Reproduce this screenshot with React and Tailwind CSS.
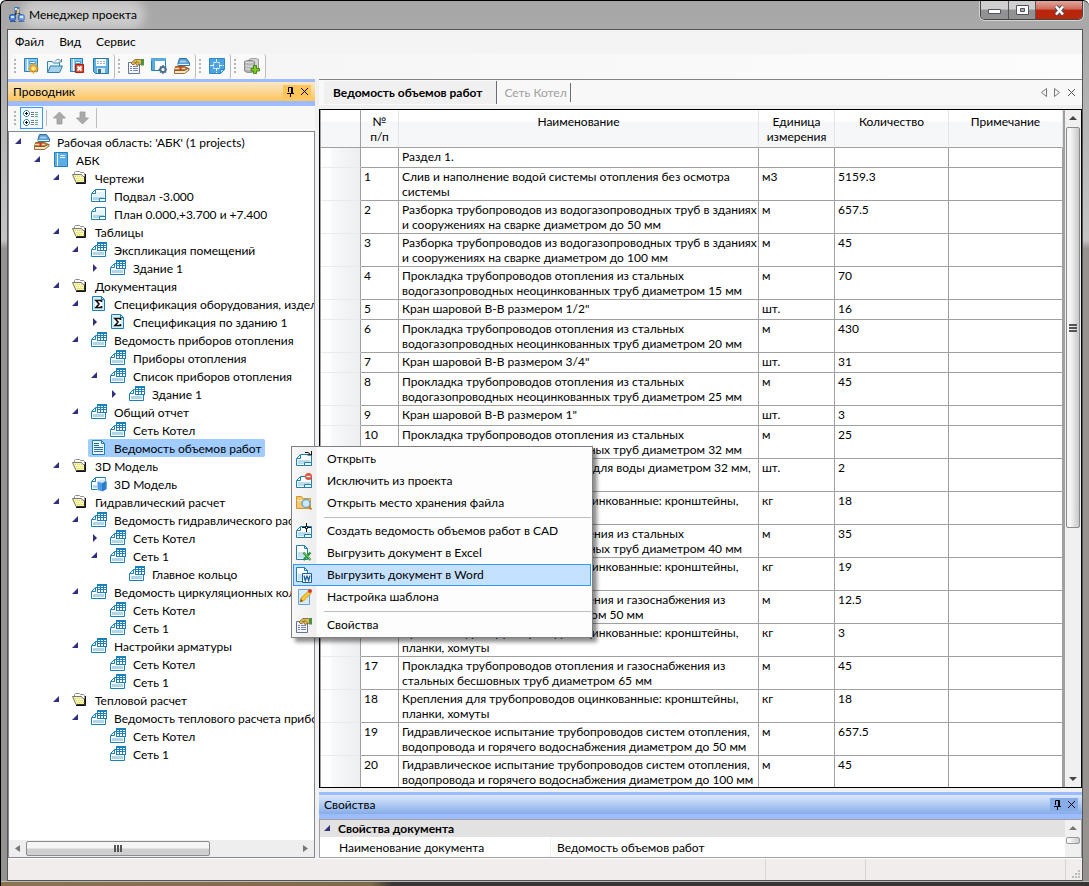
/**
 * App.jsx
 *
 * Project manager window: explorer tree on the left, bill of quantities
 * on the right, properties panel below and the document context menu.
 */

import { useState } from "react";
import clsx from "clsx";

/* ── Icons ───────────────────────────────────────────────────── */
const Icon = ({ children, size = 16 }) => (
  <svg
    width={size}
    height={size}
    viewBox="0 0 16 16"
    className="shrink-0"
    fill="none"
    aria-hidden="true"
  >
    {children}
  </svg>
);

const SheetIcon = () => (
  <Icon>
    <path d="M4.500 1.500h10v12H.5v-8z" fill="#fff" stroke="#1c7fb5" />
    <path d="M5 4h8v5H2V6.500h3z" fill="#e6f3f9" />
    <path d="M2 9h11v3H2z" fill="#b0d6e8" />
    <path d="M1 5.500h3.500V2" stroke="#1c7fb5" />
    <path d="M8.500 13.500v-3h6v3z" fill="#fff" stroke="#1c7fb5" />
  </Icon>
);

const TableDocIcon = () => (
  <Icon>
    <path d="M4.500 3.500h10v11H.5v-7z" fill="#fff" stroke="#1c7fb5" />
    <path d="M1 7.500h3.500V4" stroke="#1c7fb5" />
    <path d="M2 10h11v3H2z" fill="#b0d6e8" />
    <path d="M6 0h10v9H6z" fill="#1c7fb5" />
    <path d="M7 2h2v1H7zM10 2h2v1h-2zM13 2h2v1h-2zM7 4h2v1H7zM10 4h2v1h-2zM13 4h2v1h-2zM7 6h2v2H7zM10 6h2v2h-2zM13 6h2v2h-2z" fill="#fff" />
  </Icon>
);

const FolderIcon = () => (
  <Icon>
    <path d="M2.500 4.500V2.500l1-1h4l1 1h3l1 1v2" fill="#fff" stroke="#8a8a8a" />
    <path d="M.5 4.500h9l1.500 2h2v6H4z" fill="#f4f2b8" stroke="#77776a" />
    <path d="M13.500 4v9.500H4" stroke="#111" />
    <path d="M12.500 7v5.500H5" stroke="#333" />
    <path d="M3 6.500h7M4 8.500h8M5 10.500h7" stroke="#e8e22c" strokeDasharray="1 1" />
    <path d="M4 7.500h8M5 9.500h7" stroke="#fff" strokeDasharray="1 1" />
  </Icon>
);

const BookIcon = () => (
  <Icon>
    <path d="M1.500.500h13v14h-13z" fill="#5bade4" stroke="#2280bd" />
    <path d="M4 1h1v13H4z" fill="#fff" />
    <path d="M7 3.500h5M7 5.500h5" stroke="#e7f5fd" />
  </Icon>
);

const BooksIcon = () => (
  <Icon>
    <path d="M4 5l1.500-4.500h7L15.500 5v2.500H4z" fill="#5a9fd0" stroke="#23699e" strokeWidth=".9" />
    <path d="M6.500 2.500h5l1.500 2H5.500z" fill="#a5d0ec" />
    <path d="M4 6.500h11" stroke="#e8f3fa" />
    <path d="M1.500 8.500h9l4 2v2H.5z" fill="#c9842f" stroke="#7a4a1a" strokeWidth=".8" />
    <path d="M1 10.500h10" stroke="#f7dcae" />
    <path d="M.5 12.500h10L15 10v2l-4.500 3.500H.500z" fill="#f9e3c5" stroke="#7a4a1a" strokeWidth=".8" />
    <path d="M6.500 8.500v3.500" stroke="#e02a1e" strokeWidth="2" />
  </Icon>
);

const SigmaIcon = () => (
  <Icon>
    <path d="M1.500.5h9l3 3v11h-12z" fill="#d3ecf7" stroke="#1c7fb5" />
    <path d="M10.500.5v3h3" stroke="#1c7fb5" />
    <path d="M4 4h7v8H4z" fill="#fff" />
    <path d="M10.500 6V4.500H5L8 8l-3 3.500h5.500V10" stroke="#111" strokeWidth="1.600" />
  </Icon>
);

const TextDocIcon = () => (
  <Icon>
    <path d="M1.500.5h9l3 3v11h-12z" fill="#eaf7fd" stroke="#1c7fb5" />
    <path d="M10.500.5v3h3" stroke="#1c7fb5" />
    <path d="M3 3.500h5M3 5.500h5M3 7.500h9M3 9.500h9M3 11.500h9" stroke="#246f98" />
  </Icon>
);

const ModelIcon = () => (
  <Icon>
    <path d="M4.500 1.500h10v12H.5v-8z" fill="#fff" stroke="#1c7fb5" />
    <path d="M1 5.500h3.500V2" stroke="#1c7fb5" />
    <path d="M2 9h4v3H2z" fill="#b9dcec" />
    <path d="M6 5h9.500v8L12 15.500 6 14z" fill="#9fccf5" />
    <path d="M7 6h4v9l-4-1z" fill="#4d9be6" />
    <path d="M11 7l4.500-2v8L11 15.500z" fill="#2b7ccc" />
    <path d="M6 5.500l2-2h7.500L11.500 7z" fill="#d0e8fc" />
  </Icon>
);

const BookNewIcon = () => (
  <Icon>
    <path d="M.5.500h13v13H.5z" fill="#8cc8ec" stroke="#2280bd" />
    <path d="M3 1h1v12H3z" fill="#fff" />
    <path d="M5.500 3.500h6v2h-6z" fill="#fff" stroke="#4c9bc8" />
    <path d="M9.500 5.500v10M4.500 10.500h10M6 7l7 7M13 7l-7 7" stroke="#f0970f" strokeWidth="1.800" />
    <circle cx="9.500" cy="10.500" r="2.300" fill="#ffee74" />
  </Icon>
);

const OpenIcon = () => (
  <Icon>
    <path d="M.5 14V3.500h5l1 1.500h6v3" fill="#e6f4fb" stroke="#3685ad" />
    <path d="M.5 14.500l3-6.500h12l-3 6.500z" fill="#a5d2ea" stroke="#2b80ac" />
    <path d="M8 3.500c2-3 4.500-2.500 6 0m.5-2.500v3h-3" stroke="#5c8599" />
  </Icon>
);

const BookRemoveIcon = () => (
  <Icon>
    <path d="M.5.500h12v13H.5z" fill="#8cc8ec" stroke="#2280bd" />
    <path d="M3 1h1v12H3z" fill="#fff" />
    <path d="M5.500 3.500h5v2h-5z" fill="#fff" stroke="#4c9bc8" />
    <path d="M5.500 6.500h8v8h-8z" fill="#dd4c37" stroke="#a9200f" />
    <path d="M7.500 8.500l4 4M11.500 8.500l-4 4" stroke="#fff" strokeWidth="1.800" />
  </Icon>
);

const SaveIcon = () => (
  <Icon>
    <path d="M.5.500h15v15H2.500l-2-2z" fill="#5fb1df" stroke="#2179ac" />
    <path d="M3 1h10v7H3z" fill="#fff" />
    <path d="M4 3.500h8M4 5.500h8" stroke="#96b4c4" strokeDasharray="2 1" />
    <path d="M4 10h8v5H4z" fill="#d9e9f2" />
    <path d="M5 11h3v4H5z" fill="#3d6e8c" />
  </Icon>
);

const PropertiesIcon = () => (
  <Icon>
    <path d="M.5 4.500h11v11H.5z" fill="#f5f7fd" stroke="#667394" />
    <path d="M2 8.500h2M2 10.500h2M2 12.500h2M5 8.500h5M5 10.500h5M5 12.500h5" stroke="#7685ae" />
    <path d="M3 5l4-3.500h4l3 .5v4.500l-3-.5-1.500 2-2-2.500L5 7z" fill="#e3bd58" stroke="#75571a" strokeWidth=".8" />
    <path d="M6 4l3 1M8 3l3 2" stroke="#75571a" strokeWidth=".7" />
    <path d="M13 1h3v6.500h-3z" fill="#4d9142" />
  </Icon>
);

const ViewSettingsIcon = () => (
  <Icon>
    <path d="M.5.500h14v12H.5z" fill="#fff" stroke="#2280bd" />
    <path d="M0 0h15v3H0zM1 3h3v9H1z" fill="#57abdf" />
    <circle cx="12" cy="11.500" r="2.600" fill="#fff" stroke="#51708b" strokeWidth="2" />
    <path d="M12 7v2M12 14v2M7.500 11.500h2M14.500 11.500h1.500M9 8.500l1 1M14 13.500l1 1M15 8.500l-1 1M9 14.500l1-1" stroke="#51708b" strokeWidth="1.500" />
  </Icon>
);

const BlueprintIcon = () => (
  <Icon>
    <path d="M.5.500h15v11l-4 4H.5z" fill="#4ba3e0" stroke="#2d86c4" />
    <path d="M11.500 15.500v-4h4z" fill="#b7def8" stroke="#2d86c4" />
    <path d="M4.500 4.500h6v6h-6zM7.500 1v4M7.500 10v5M1 7.500h4M10 7.500h5" stroke="#e8f5fd" strokeDasharray="3 1" />
  </Icon>
);

const DbAddIcon = () => (
  <Icon>
    <path d="M5 1.500c2-1.500 8-1.500 9.500 0v10H5z" fill="#d5d5d5" stroke="#888" strokeWidth=".8" />
    <path d="M.5 3.500c2-1.500 8-1.500 10 0v9.500c-2 2-8 2-10 0z" fill="#b4b4b4" stroke="#777" strokeWidth=".8" />
    <path d="M1.500 4c2 1 6 1 8 0M1.500 7.500c2 1 6 1 8 0M1.500 10.500c2 1 5 1 7 0" stroke="#ececec" />
    <path d="M9.500 7.500h3v3h3v2.500h-3v2.500h-3v-2.500H7v-2.500h2.500z" fill="#7ccb22" stroke="#34720a" strokeWidth=".8" />
  </Icon>
);

const TreeViewIcon = () => (
  <Icon>
    <path d="M.5 2.500l2-2h2l2 2v2l-2 2h-2l-2-2zM.5 11.500l2-2h2l2 2v2l-2 2h-2l-2-2z" fill="#fff" stroke="#2e83a6" />
    <path d="M2 3.500h3M3.500 2v3M2 12.500h3M3.500 11v3" stroke="#111" />
    <path d="M8 2.500h3M8 4.500h3M8 6.500h3M8 10.500h3M8 12.500h3M8 14.500h3" stroke="#777" />
    <path d="M12 2.500h3M12 4.500h3M12 6.500h3M12 10.500h3M12 12.500h3M12 14.500h3" stroke="#64ad8c" />
  </Icon>
);

const ArrowIcon = ({ down }) => (
  <Icon>
    <path
      d={down ? "M5 2h5v6h3.500l-6 6-6-6H5z" : "M5 14h5V8h3.500l-6-6-6 6H5z"}
      fill="#aaa"
      stroke="#999"
      strokeWidth=".8"
    />
  </Icon>
);

const MenuSheet = () => (
  <>
    <path d="M4.500 3.500h11v11H.5v-7z" fill="#fff" stroke="#1c7fb5" />
    <path d="M1 7.500h3.500V4" stroke="#1c7fb5" />
    <path d="M2 9h12v4H2z" fill="#b9dcec" />
    <path d="M8.500 14.500v-3h7v3z" fill="#fff" stroke="#1c7fb5" />
  </>
);

const MenuOpenIcon = () => (
  <Icon>
    <MenuSheet />
    <path d="M9 1.500h3l2.500 2M15.500 0v4h-4" stroke="#111" />
  </Icon>
);

const MenuExcludeIcon = () => (
  <Icon>
    <MenuSheet />
    <circle cx="12.500" cy="3.500" r="3.500" fill="#dc5039" />
    <path d="M10.500 3.500h4" stroke="#fff" strokeWidth="1.500" />
  </Icon>
);

const MenuLocationIcon = () => (
  <Icon>
    <path d="M.5 13.500v-12h5l1.500 2h7.500v10z" fill="#f5c872" stroke="#d5942c" />
    <path d="M1 5.500h13" stroke="#fff0cb" />
    <circle cx="10" cy="8.500" r="4" fill="#cdeaf9" stroke="#70a5c2" strokeWidth="1.500" />
    <path d="M12.500 11.500l3 3" stroke="#c8862b" strokeWidth="2" />
  </Icon>
);

const MenuCadIcon = () => (
  <Icon>
    <MenuSheet />
    <path d="M10.500 0v9M6 4.500h9" stroke="#111" />
    <path d="M9.500 3.500h2v2h-2z" fill="#fff" stroke="#111" />
  </Icon>
);

const MenuExcelIcon = () => (
  <Icon>
    <path d="M.5.500h8l3 3v11H.5z" fill="#fff" stroke="#1c7fb5" />
    <path d="M8.500.5v3h3" stroke="#1c7fb5" />
    <path d="M2 7h7v6H2z" fill="#c4e1ef" />
    <path d="M7.500 7.500l7 7.500M14.500 7.500l-7 7.500" stroke="#2e9433" strokeWidth="2.500" />
    <path d="M8 7.500l6.500 7" stroke="#b9e0b0" strokeWidth=".8" />
  </Icon>
);

const MenuWordIcon = () => (
  <Icon>
    <path d="M.5.500h8l3 3v11H.5z" fill="#fff" stroke="#1c7fb5" />
    <path d="M8.500.5v3h3" stroke="#1c7fb5" />
    <path d="M2 7h4v6H2z" fill="#c4e1ef" />
    <path d="M6.500 6.500h9v9h-9z" fill="#fff" stroke="#1a5da0" />
    <path d="M8 8.500l1.300 5L11 9l1.700 4.500L14 8.500" stroke="#1a5da0" strokeWidth="1.300" />
  </Icon>
);

const MenuTemplateIcon = () => (
  <Icon>
    <path d="M2.500.500h11v15h-11z" fill="#d9ecfc" stroke="#61a6de" />
    <path d="M4 13l1-4 7.500-7 2.500 2.500L7.500 12z" fill="#f6c93c" stroke="#c98a18" strokeWidth=".8" />
    <path d="M4 13l1-3 2 2z" fill="#775522" />
    <circle cx="14" cy="2" r="2" fill="#dc3a28" />
  </Icon>
);

const PinIcon = () => (
  <svg width="9" height="10" viewBox="0 0 9 10" fill="none" aria-hidden="true">
    <path d="M2.500 5V.5h4V6M5.500 1v5M1 6.500h7M4.500 6.500V10" stroke="#000" />
  </svg>
);

const CloseIcon = ({ color = "#000" }) => (
  <svg width="9" height="9" viewBox="0 0 9 9" fill="none" aria-hidden="true">
    <path d="M1 1l7 7M8 1L1 8" stroke={color} />
  </svg>
);

const AppIcon = () => (
  <Icon>
    <path d="M8 5L4 10M9 5l4 5" stroke="#222" strokeWidth="1.500" />
    <path d="M5.500 0h5v6h-5z" fill="#3f6cc0" />
    <path d="M8 2h2v4H8z" fill="#e3c84c" />
    <rect x=".5" y="7.500" width="6" height="6" rx="2" fill="#4f88e0" stroke="#2c55a0" />
    <rect x="9.500" y="7.500" width="6" height="6" rx="2" fill="#4f88e0" stroke="#2c55a0" />
    <path d="M2 9h3v2H2zM11 9h3v2h-3zM6 1h2v2H6z" fill="#d4e6ff" />
    <path d="M1 14.500h6M9.500 14.500h6" stroke="#365ba0" />
  </Icon>
);

/* ── Data ────────────────────────────────────────────────────── */
const TREE_ICONS = {
  books: BooksIcon,
  book: BookIcon,
  folder: FolderIcon,
  sheet: SheetIcon,
  table: TableDocIcon,
  sigma: SigmaIcon,
  text: TextDocIcon,
  model: ModelIcon,
};

// [level, state, icon, label]
const TREE = [
  [0, "open", "books", "Рабочая область: 'АБК' (1 projects)"],
  [1, "open", "book", "АБК"],
  [2, "open", "folder", "Чертежи"],
  [3, "", "sheet", "Подвал -3.000"],
  [3, "", "sheet", "План 0.000,+3.700 и +7.400"],
  [2, "open", "folder", "Таблицы"],
  [3, "open", "table", "Экспликация помещений"],
  [4, "closed", "table", "Здание 1"],
  [2, "open", "folder", "Документация"],
  [3, "open", "sigma", "Спецификация оборудования, изделий"],
  [4, "closed", "sigma", "Спецификация по зданию 1"],
  [3, "open", "table", "Ведомость приборов отопления"],
  [4, "", "table", "Приборы отопления"],
  [4, "open", "table", "Список приборов отопления"],
  [5, "closed", "table", "Здание 1"],
  [3, "open", "table", "Общий отчет"],
  [4, "", "table", "Сеть Котел"],
  [3, "", "text", "Ведомость объемов работ"],
  [2, "open", "folder", "3D Модель"],
  [3, "", "model", "3D Модель"],
  [2, "open", "folder", "Гидравлический расчет"],
  [3, "open", "table", "Ведомость гидравлического расчета"],
  [4, "closed", "table", "Сеть Котел"],
  [4, "open", "table", "Сеть 1"],
  [5, "", "table", "Главное кольцо"],
  [3, "open", "table", "Ведомость циркуляционных колец"],
  [4, "", "table", "Сеть Котел"],
  [4, "", "table", "Сеть 1"],
  [3, "open", "table", "Настройки арматуры"],
  [4, "", "table", "Сеть Котел"],
  [4, "", "table", "Сеть 1"],
  [2, "open", "folder", "Тепловой расчет"],
  [3, "open", "table", "Ведомость теплового расчета приборов"],
  [4, "", "table", "Сеть Котел"],
  [4, "", "table", "Сеть 1"],
];

const FIXINGS = "Крепления для трубопроводов оцинкованные: кронштейны,\nпланки, хомуты";

const ROWS = [
  ["", "Раздел 1.", "", ""],
  ["1", "Слив и наполнение водой системы отопления без осмотра\nсистемы", "м3", "5159.3"],
  ["2", "Разборка трубопроводов из водогазопроводных труб в зданиях\nи сооружениях на сварке диаметром до 50 мм", "м", "657.5"],
  ["3", "Разборка трубопроводов из водогазопроводных труб в зданиях\nи сооружениях на сварке диаметром до 100 мм", "м", "45"],
  ["4", "Прокладка трубопроводов отопления из стальных\nводогазопроводных неоцинкованных труб диаметром 15 мм", "м", "70"],
  ["5", "Кран шаровой В-В размером 1/2\"", "шт.", "16"],
  ["6", "Прокладка трубопроводов отопления из стальных\nводогазопроводных неоцинкованных труб диаметром 20 мм", "м", "430"],
  ["7", "Кран шаровой В-В размером 3/4\"", "шт.", "31"],
  ["8", "Прокладка трубопроводов отопления из стальных\nводогазопроводных неоцинкованных труб диаметром 25 мм", "м", "45"],
  ["9", "Кран шаровой В-В размером 1\"", "шт.", "3"],
  ["10", "Прокладка трубопроводов отопления из стальных\nводогазопроводных неоцинкованных труб диаметром 32 мм", "м", "25"],
  ["11", "Клапаны регулировочные ручные для воды диаметром 32 мм,\nмуфтовые", "шт.", "2"],
  ["12", FIXINGS, "кг", "18"],
  ["13", "Прокладка трубопроводов отопления из стальных\nводогазопроводных неоцинкованных труб диаметром 40 мм", "м", "35"],
  ["14", FIXINGS, "кг", "19"],
  ["15", "Прокладка трубопроводов отопления и газоснабжения из\nстальных напорных труб диаметром 50 мм", "м", "12.5"],
  ["16", FIXINGS, "кг", "3"],
  ["17", "Прокладка трубопроводов отопления и газоснабжения из\nстальных бесшовных труб диаметром 65 мм", "м", "45"],
  ["18", FIXINGS, "кг", "18"],
  ["19", "Гидравлическое испытание трубопроводов систем отопления,\nводопровода и горячего водоснабжения диаметром до 50 мм", "м", "657.5"],
  ["20", "Гидравлическое испытание трубопроводов систем отопления,\nводопровода и горячего водоснабжения диаметром до 100 мм", "м", "45"],
];

const MENU = [
  { label: "Открыть", icon: MenuOpenIcon },
  { label: "Исключить из проекта", icon: MenuExcludeIcon },
  { label: "Открыть место хранения файла", icon: MenuLocationIcon },
  null,
  { label: "Создать ведомость объемов работ в CAD", icon: MenuCadIcon },
  { label: "Выгрузить документ в Excel", icon: MenuExcelIcon },
  { label: "Выгрузить документ в Word", icon: MenuWordIcon },
  { label: "Настройка шаблона", icon: MenuTemplateIcon },
  null,
  { label: "Свойства", icon: PropertiesIcon },
];

const TOOLBAR = [
  [
    ["Новый проект", BookNewIcon],
    ["Открыть", OpenIcon],
    ["Закрыть проект", BookRemoveIcon],
    ["Сохранить", SaveIcon],
  ],
  [
    ["Окно свойств", PropertiesIcon],
    ["Настройки", ViewSettingsIcon],
    ["Библиотека", BooksIcon],
  ],
  [["Чертеж", BlueprintIcon]],
  [["Добавить базу", DbAddIcon]],
];

/* ── Small parts ─────────────────────────────────────────────── */
const Grip = () => (
  <span className="mr-1 flex flex-col gap-[2px]">
    {[0, 1, 2, 3].map((i) => (
      <span key={i} className="size-[2px] bg-[#b4b4b4]" />
    ))}
  </span>
);

const Twisty = ({ state }) => (
  <svg width="8" height="8" viewBox="0 0 8 8" aria-hidden="true">
    {state === "open" ? (
      <path d="M7 0v6H1z" fill="#30307c" />
    ) : (
      <path d="M3 0l4 4-4 4z" fill="#30307c" />
    )}
  </svg>
);

const TitleBar = () => (
  <header className="flex h-7 items-start pl-[2px]">
    <div className="flex h-full items-center gap-1 pb-px">
      <AppIcon />
      <h1 className="rounded-full bg-white/40 text-black shadow-[0_0_10px_8px_rgba(255,255,255,0.4)]">
        Менеджер проекта
      </h1>
    </div>
    <div className="ml-auto flex h-[19px] overflow-hidden rounded-b-[5px] border border-t-0 border-[#444] shadow-[0_0_0_1px_rgba(255,255,255,0.5)]">
      <button
        aria-label="Свернуть"
        className="flex w-[28px] items-center justify-center border-r border-[#555] bg-linear-to-b from-[#cfcfcf] from-45% to-[#929292] to-50%"
      >
        <svg width="13" height="6" viewBox="0 0 13 6" className="mt-1">
          <path d="M.5.500h12v4H.5z" fill="#fff" stroke="#4f5364" />
        </svg>
      </button>
      <button
        aria-label="Развернуть"
        className="flex w-[27px] items-center justify-center border-r border-[#555] bg-linear-to-b from-[#cfcfcf] from-45% to-[#929292] to-50%"
      >
        <svg width="13" height="11" viewBox="0 0 13 11">
          <path d="M.5.500h12v9H.5z" fill="#fff" stroke="#4f5364" />
          <path d="M4.500 3.500h4v3h-4z" fill="#aaa" stroke="#4f5364" />
        </svg>
      </button>
      <button
        aria-label="Закрыть"
        className="flex w-[46px] items-center justify-center bg-linear-to-b from-[#e0a79e] via-[#cf6a58] via-45% to-[#b9260b] to-50%"
      >
        <svg width="13" height="11" viewBox="0 0 13 11">
          <path d="M3 1.500l7 8M10 1.500l-7 8" stroke="#4f5364" strokeWidth="4.500" />
          <path d="M3 1.500l7 8M10 1.500l-7 8" stroke="#fff" strokeWidth="2.500" />
        </svg>
      </button>
    </div>
  </header>
);

const PanelHeader = ({ title, gold }) => (
  <div
    className={clsx(
      "flex h-[27px] shrink-0 items-center border-t-[3px] border-b-[5px] border-[#9dbcff] pl-[5px] pr-1",
      gold
        ? "bg-linear-to-b from-[#fbe8c6] to-[#fdc45a]"
        : "bg-linear-to-b from-[#dbe8fd] to-[#86ade8]"
    )}
  >
    <h2 className="leading-4">{title}</h2>
    <div className={clsx("ml-auto flex h-[13px]", gold ? "bg-[#fdc45a]" : "bg-[#86ade8]")}>
      <button aria-label="Закрепить" className="flex w-[14px] items-center justify-center">
        <PinIcon />
      </button>
      <button aria-label="Закрыть панель" className="flex w-[14px] items-center justify-center">
        <CloseIcon />
      </button>
    </div>
  </div>
);

/* ── Explorer ────────────────────────────────────────────────── */
const Explorer = ({ selected, onSelect }) => (
  <aside className="flex w-[307px] shrink-0 flex-col">
    <PanelHeader title="Проводник" gold />
    <div className="flex h-[25px] shrink-0 items-center bg-[#f8f8f8] pb-px pl-[6px]">
      <Grip />
      <button
        aria-label="Показать дерево"
        className="flex h-[22px] w-[23px] items-center border border-[#3399ff] bg-[#f4f9ff] pl-[2px]"
      >
        <TreeViewIcon />
      </button>
      <span className="mr-px ml-[3px] h-4 w-px bg-[#bdbdbd]" />
      <button aria-label="Вверх" className="flex w-[23px] pl-1">
        <ArrowIcon />
      </button>
      <button aria-label="Вниз" className="flex w-[23px] pl-1">
        <ArrowIcon down />
      </button>
      <span className="ml-[2px] h-5 w-px bg-[#bdbdbd]" />
    </div>
    <div className="flex min-h-0 flex-1 flex-col border border-[#828790] bg-white">
      <ul role="tree" className="min-h-0 flex-1 overflow-hidden pt-px">
        {TREE.map(([level, state, icon, label], i) => {
          const ItemIcon = TREE_ICONS[icon];
          return (
            <li
              key={i}
              role="treeitem"
              aria-level={level + 1}
              aria-selected={selected === i}
              onClick={() => onSelect(i)}
              className="flex h-[18px] items-center whitespace-nowrap"
              style={{ paddingLeft: level * 19 + 5 }}
            >
              <span className="w-[17px] shrink-0">{state && <Twisty state={state} />}</span>
              <span
                className={clsx(
                  "flex h-[18px] items-center gap-[7px] rounded-[2px] px-[3px]",
                  selected === i && "bg-[#a0ccff]"
                )}
              >
                <ItemIcon />
                {label}
              </span>
            </li>
          );
        })}
      </ul>
      <div className="flex h-[17px] shrink-0 items-center bg-[#eee] px-[6px]">
        <svg width="5" height="7" viewBox="0 0 5 7"><path d="M5 0v7L0 3.500z" fill="#777" /></svg>
        <div className="ml-[6px] flex h-[15px] w-[184px] items-center justify-center gap-px rounded-[2px] border border-[#8b8b8b] bg-linear-to-b from-[#f5f5f5] from-45% to-[#cfcfcf] to-55%">
          <span className="h-[7px] w-[2px] bg-[#555]" />
          <span className="h-[7px] w-[2px] bg-[#555]" />
          <span className="h-[7px] w-[2px] bg-[#555]" />
        </div>
        <svg width="5" height="7" viewBox="0 0 5 7" className="ml-auto"><path d="M0 0v7l5-3.500z" fill="#777" /></svg>
      </div>
    </div>
  </aside>
);

/* ── Document table ──────────────────────────────────────────── */
const HEAD_CELL =
  "border-r border-b border-r-[#e2e4e6] border-b-[#a0a0a0] bg-linear-to-b from-white from-30% to-[#f6f7f9] to-32% pt-[4px] align-top font-normal whitespace-pre-line";
const CELL = "border-r border-b border-[#a0a0a0] pt-px pl-[3px] align-top";

const WorksTable = () => (
  <div className="flex min-h-0 flex-1 border border-black bg-white">
    <div className="min-w-0 flex-1 overflow-hidden border-l border-[#a0a0a0]">
      <table className="w-full table-fixed border-separate border-spacing-0 border-r-2 border-[#a0a0a0] text-left leading-[15px]">
        <colgroup>
          <col className="w-[40px]" />
          <col className="w-[38px]" />
          <col />
          <col className="w-[76px]" />
          <col className="w-[114px]" />
          <col className="w-[114px]" />
        </colgroup>
        <thead>
          <tr className="h-[38px] text-center">
            <th className="border-r border-b border-[#a0a0a0] bg-linear-to-b from-white from-30% to-[#f6f7f9] to-32%" />
            <th className={HEAD_CELL}>{"№\nп/п"}</th>
            <th className={HEAD_CELL}>Наименование</th>
            <th className={HEAD_CELL}>{"Единица\nизмерения"}</th>
            <th className={HEAD_CELL}>Количество</th>
            <th className={HEAD_CELL}>Примечание</th>
          </tr>
        </thead>
        <tbody>
          {ROWS.map(([num, name, unit, qty], i) => (
            <tr key={i} className={name.includes("\n") ? "h-[33px]" : "h-[20px]"}>
              <td className="border-r border-b border-r-[#a0a0a0] border-b-[#e8eaec] bg-linear-to-r from-white from-25% via-[#f8f9fa] via-26% to-[#eceef0]" />
              <td className={CELL}>{num}</td>
              <td className={clsx(CELL, "whitespace-pre")}>{name}</td>
              <td className={CELL}>{unit}</td>
              <td className={CELL}>{qty}</td>
              <td className={CELL} />
            </tr>
          ))}
        </tbody>
      </table>
    </div>
    <div className="flex w-4 shrink-0 flex-col items-center bg-[#f0f0f0] py-[6px]">
      <svg width="8" height="4" viewBox="0 0 8 4"><path d="M0 4h8L4 0z" fill="#444" /></svg>
      <div className="mt-[7px] flex h-[401px] w-[14px] flex-col items-center justify-center gap-px rounded-[2px] border border-[#8b8b8b] bg-linear-to-r from-[#f5f5f5] from-30% to-[#c6c7c9]">
        <span className="h-[2px] w-2 bg-[#555]" />
        <span className="h-[2px] w-2 bg-[#555]" />
        <span className="h-[2px] w-2 bg-[#555]" />
      </div>
      <svg width="8" height="4" viewBox="0 0 8 4" className="mt-auto"><path d="M0 0h8L4 4z" fill="#444" /></svg>
    </div>
  </div>
);

const DocumentTabs = () => (
  <div className="flex h-[26px] shrink-0 items-stretch border-t border-[#828282] bg-[#f8f8f8] pl-[5px] pr-[6px]">
    <button className="my-px border-r border-[#6d6d6d] bg-[#f0f0f0] pr-[14px] pl-[9px] font-bold">
      Ведомость объемов работ
    </button>
    <button className="my-[3px] border-r border-[#6d6d6d] pr-[3px] pl-[7px] text-[#a0a0a0]">
      Сеть Котел
    </button>
    <div className="ml-auto flex items-center gap-[7px]">
      <button aria-label="Предыдущая вкладка">
        <svg width="6" height="9" viewBox="0 0 6 9" fill="none"><path d="M5.500.5v8l-5-4z" stroke="#777" /></svg>
      </button>
      <button aria-label="Следующая вкладка">
        <svg width="6" height="9" viewBox="0 0 6 9" fill="none"><path d="M.5.500v8l5-4z" stroke="#777" /></svg>
      </button>
      <button aria-label="Закрыть вкладку">
        <CloseIcon color="#555" />
      </button>
    </div>
  </div>
);

/* ── Properties panel ────────────────────────────────────────── */
const Properties = () => (
  <section className="shrink-0">
    <PanelHeader title="Свойства" />
    <div className="flex h-[39px] border border-[#a0a0a0] bg-white">
      <div className="min-w-0 flex-1">
        <h3 className="flex h-[17px] items-center gap-[7px] bg-[#e2e2e2] pl-[3px] font-bold">
          <Twisty state="open" />
          Свойства документа
        </h3>
        <div className="flex h-5 items-center pl-[19px]">
          <label htmlFor="doc-name" className="w-[211px]">
            Наименование документа
          </label>
          <input
            id="doc-name"
            defaultValue="Ведомость объемов работ"
            className="h-5 min-w-0 flex-1 border-l border-[#f0f0f0] bg-transparent pl-[6px] outline-none"
          />
        </div>
      </div>
      <div className="flex w-4 flex-col items-center bg-[#f0f0f0] pt-[6px]">
        <svg width="8" height="4" viewBox="0 0 8 4"><path d="M0 4h8L4 0z" fill="#777" /></svg>
        <div className="mt-[7px] h-[7px] w-[14px] rounded-[2px] border border-[#999] bg-linear-to-r from-white to-[#ccc]" />
      </div>
    </div>
  </section>
);

/* ── Context menu ────────────────────────────────────────────── */
const ContextMenu = () => (
  <div
    role="menu"
    className="absolute top-[445px] left-[290px] w-[302px] border border-[#808080] bg-linear-to-r from-[#f8f8f8] from-0% via-[#eee] via-[24px] to-[#fdfdfd] to-[25px] p-px shadow-[4px_4px_4px_rgba(0,0,0,0.45)]"
  >
    {MENU.map((item, i) =>
      item ? (
        <button
          key={i}
          role="menuitem"
          className={clsx(
            "flex h-[22px] w-full items-center gap-[15px] border pb-px pl-[2px] text-left whitespace-nowrap",
            item.label.endsWith("Word")
              ? "border-[#3399ff] bg-[#c4e1ff]"
              : "border-transparent"
          )}
        >
          <item.icon />
          {item.label}
        </button>
      ) : (
        <hr key={i} className="mt-[3px] mb-[2px] ml-[31px] border-t border-[#bdbdbd]" />
      )
    )}
  </div>
);

/* ── App ─────────────────────────────────────────────────────── */
const App = () => {
  const [selected, setSelected] = useState(17);

  return (
    <div className="relative flex h-screen flex-col overflow-hidden rounded-t-[6px] border-t border-l border-black bg-linear-to-b from-[#a6a6a6] via-[#c4c4c4] via-27% to-[#959290] to-28% px-[6px] font-['Lato','Noto_Sans',sans-serif] text-[12px] leading-[15px] text-black">
      <TitleBar />
      <div className="flex min-h-0 flex-1 flex-col border border-[#555] bg-[#f0f0f0]">
        <nav className="flex h-6 shrink-0 items-center gap-[15px] bg-[#f4f4f4] pb-[2px] pl-[7px]">
          <button>Файл</button>
          <button>Вид</button>
          <button>Сервис</button>
        </nav>
        <div className="flex h-[25px] shrink-0 bg-linear-to-r from-[#f4f4f4] to-[#fcfcfc] pl-[3px]">
          {TOOLBAR.map((group, g) => (
            <div key={g} className="flex items-center rounded-[3px] border-r border-[#bdbdbd] bg-[#fafafa] pr-[2px] pb-px pl-[3px]">
              <Grip />
              {group.map(([label, ToolIcon]) => (
                <button key={label} aria-label={label} className="flex w-[23px] pl-1">
                  <ToolIcon />
                </button>
              ))}
            </div>
          ))}
        </div>
        <div className="flex min-h-0 flex-1 gap-1">
          <Explorer selected={selected} onSelect={setSelected} />
          <main className="flex min-w-0 flex-1 flex-col gap-1">
            <div className="flex min-h-0 flex-1 flex-col">
              <DocumentTabs />
              <div className="h-1 shrink-0" />
              <WorksTable />
            </div>
            <Properties />
          </main>
        </div>
        <footer className="flex h-[22px] shrink-0 justify-end border-t border-white bg-[#f0edec]">
          <span className="w-[100px] border-l border-[#d7d4d3]" />
          <span className="w-[200px] border-l border-[#d7d4d3]" />
          <span className="flex w-[17px] items-end justify-end border-l border-[#d7d4d3] p-[2px]">
            <svg width="9" height="9" viewBox="0 0 9 9">
              <path d="M7 1h2v2H7zM4 4h2v2H4zM7 4h2v2H7zM1 7h2v2H1zM4 7h2v2H4zM7 7h2v2H7z" fill="#bbb" />
            </svg>
          </span>
        </footer>
      </div>
      <div className="-mx-[6px] h-[5px] shrink-0 border-t border-[#bbb] bg-linear-to-r from-[#8a7450] via-[#7d6a4b] via-34% to-[#3a3433] to-36%" />
      <ContextMenu />
    </div>
  );
};

export default App;
